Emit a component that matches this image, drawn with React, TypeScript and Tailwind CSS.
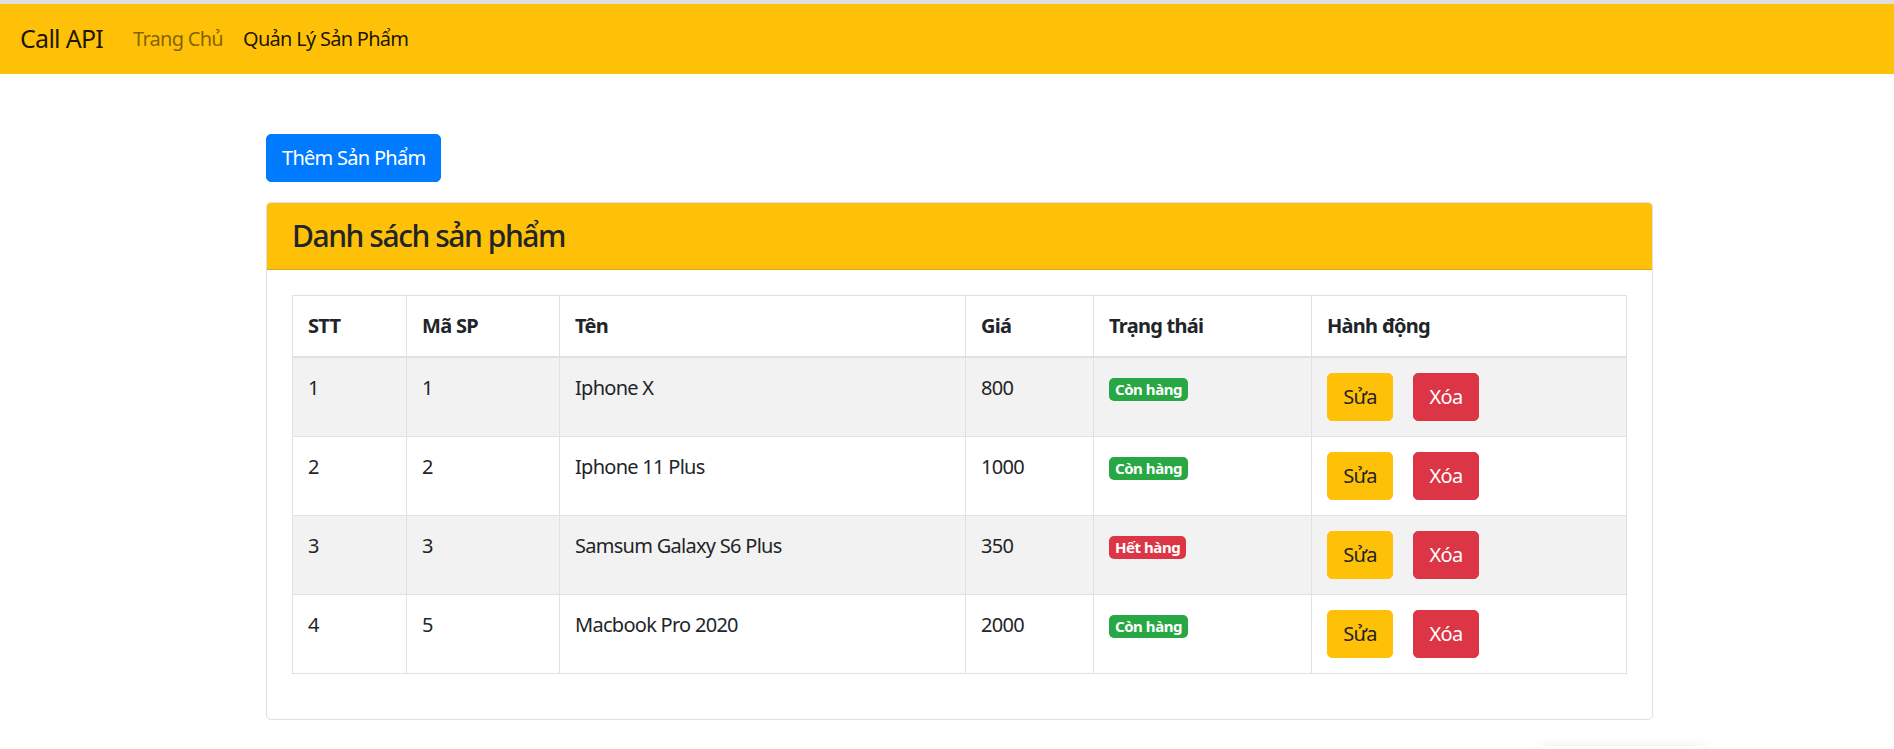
import React from "react";

const rows = [
  { stt: 1, ma: 1, ten: "Iphone X", gia: 800, con: true },
  { stt: 2, ma: 2, ten: "Iphone 11 Plus", gia: 1000, con: true },
  { stt: 3, ma: 3, ten: "Samsum Galaxy S6 Plus", gia: 350, con: false },
  { stt: 4, ma: 5, ten: "Macbook Pro 2020", gia: 2000, con: true },
];

export default function App() {
  return (
    <div
      className="relative min-h-screen overflow-hidden bg-white text-[#212529] tracking-[-0.045em]"
      style={{ fontFamily: '"Noto Sans", "Open Sans", sans-serif' }}
    >
      <div className="h-[4px] bg-[#dedede]" />
      <nav className="h-[70px] bg-[#ffc107] flex items-center px-[20px]">
        <span className="text-[25px] leading-[1.5] mr-[20px] text-black/90">Call API</span>
        <a className="text-[20px] leading-[1.5] px-[10px] text-black/50">Trang Chủ</a>
        <a className="text-[20px] leading-[1.5] px-[10px] text-black/90">Quản Lý Sản Phẩm</a>
      </nav>

      <div className="ml-[266px] w-[1387px] pt-[60px]">
        <button className="h-[48px] px-[15px] rounded-[5px] bg-[#007bff] text-white text-[20px] leading-[1.5] border border-[#007bff]">
          Thêm Sản Phẩm
        </button>

        <div className="mt-[20px] border border-black/[0.125] rounded-[5px] overflow-hidden">
          <div className="bg-[#ffc107] px-[25px] py-[15px] border-b border-black/[0.125]">
            <h4 className="text-[30px] leading-[1.2] font-medium tracking-[-0.048em]">Danh sách sản phẩm</h4>
          </div>
          <div className="p-[25px] pb-[45px]">
            <table className="w-full table-fixed border-collapse border border-[#dee2e6] text-[20px] leading-[1.5]">
              <colgroup>
                <col className="w-[114px]" />
                <col className="w-[153px]" />
                <col className="w-[406px]" />
                <col className="w-[128px]" />
                <col className="w-[218px]" />
                <col />
              </colgroup>
              <thead>
                <tr>
                  {["STT", "Mã SP", "Tên", "Giá", "Trạng thái", "Hành động"].map((h) => (
                    <th
                      key={h}
                      className="text-left font-bold p-[15px] border border-[#dee2e6] border-b-2 align-bottom"
                    >
                      {h}
                    </th>
                  ))}
                </tr>
              </thead>
              <tbody>
                {rows.map((r, i) => (
                  <tr key={r.stt} className={i % 2 === 0 ? "bg-[#f2f2f2]" : "bg-white"}>
                    <td className="p-[15px] border border-[#dee2e6] align-top">{r.stt}</td>
                    <td className="p-[15px] border border-[#dee2e6] align-top">{r.ma}</td>
                    <td className="p-[15px] border border-[#dee2e6] align-top">{r.ten}</td>
                    <td className="p-[15px] border border-[#dee2e6] align-top">{r.gia}</td>
                    <td className="p-[15px] border border-[#dee2e6] align-top">
                      {r.con ? (
                        <span className="inline-block text-[15px] font-bold leading-none px-[6px] py-[4px] rounded-[5px] bg-[#28a745] text-white align-baseline tracking-[-0.03em]">
                          Còn hàng
                        </span>
                      ) : (
                        <span className="inline-block text-[15px] font-bold leading-none px-[6px] py-[4px] rounded-[5px] bg-[#dc3545] text-white align-baseline tracking-[-0.03em]">
                          Hết hàng
                        </span>
                      )}
                    </td>
                    <td className="p-[15px] border border-[#dee2e6] align-top">
                      <div className="flex gap-[20px]">
                        <button className="h-[48px] w-[66px] rounded-[5px] bg-[#ffc107] border border-[#ffc107] text-[#212529] text-[20px] leading-[1.5]">
                          Sửa
                        </button>
                        <button className="h-[48px] w-[66px] rounded-[5px] bg-[#dc3545] border border-[#dc3545] text-white text-[20px] leading-[1.5]">
                          Xóa
                        </button>
                      </div>
                    </td>
                  </tr>
                ))}
              </tbody>
            </table>
          </div>
        </div>
      </div>

      <div className="absolute left-[1540px] top-[746px] w-[166px] h-[40px] bg-white rounded-[5px] shadow-[0_0_12px_rgba(0,0,0,0.08)]" />
    </div>
  );
}
